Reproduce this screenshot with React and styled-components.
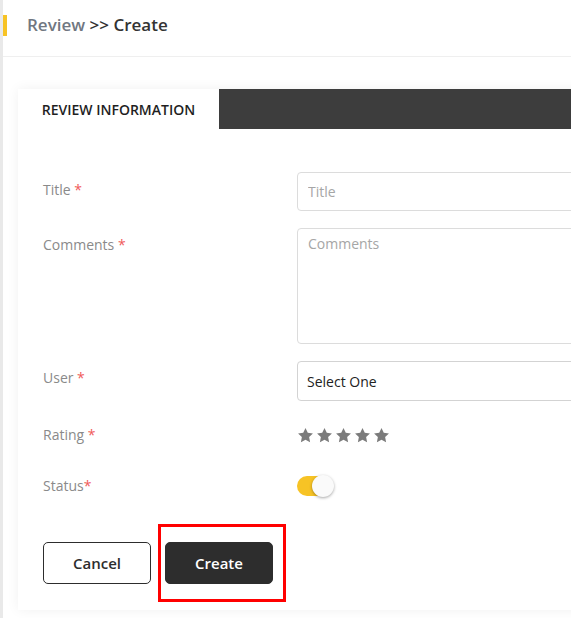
import React from 'react'
import styled, { createGlobalStyle } from 'styled-components'

const Global = createGlobalStyle`
  html, body { margin: 0; padding: 0; background: #fff; }
  body { font-family: "Open Sans", "Liberation Sans", sans-serif; overflow: hidden; }
  * { box-sizing: border-box; }
`

const Page = styled.div`
  width: 571px;
  height: 618px;
  overflow: hidden;
  border-left: 3px solid #e9e9e9;
  background: #fff;
`

const Header = styled.div`
  height: 57px;
  display: flex;
  align-items: center;
  padding-left: 24px;
  position: relative;
  border-bottom: 1px solid #efefef;
  padding-bottom: 7px;
  &::before {
    content: "";
    position: absolute;
    left: 0;
    top: 15px;
    width: 4px;
    height: 21px;
    background: #f7c325;
  }
`

const Crumb = styled.h1`
  margin: 0;
  font-size: 17px;
  font-weight: 600;
  color: #333;
  span { color: #707781; }
`

const Body = styled.div`
  padding: 32px 0 0 15px;
`

const Card = styled.div`
  width: 640px;
  background: #fff;
  box-shadow: 0 0 12px rgba(0, 0, 0, 0.06);
`

const Tabs = styled.div`
  display: flex;
  height: 40px;
  background: #3d3d3d;
`

const Tab = styled.div`
  width: 201px;
  display: flex;
  align-items: center;
  justify-content: center;
  background: ${p => (p.$active ? '#fff' : 'transparent')};
  color: #1f1f1f;
  font-size: 14px;
  font-weight: 600;
`

const Form = styled.div`
  padding: 43px 0 26px 25px;
`

const Row = styled.div`
  display: grid;
  grid-template-columns: 254px 1fr;
  align-items: start;
  margin-bottom: ${p => p.$gap ?? 17}px;
  min-height: ${p => p.$h || 0}px;
`

const Label = styled.label`
  font-size: 14px;
  line-height: 20px;
  color: #8a8a8a;
  padding-top: ${p => p.$pt ?? 7}px;
  b { color: #f05a5a; font-weight: 400; }
`

const Input = styled.input`
  width: 100%;
  height: 39px;
  border: 1px solid #dcdcdc;
  border-radius: 4px;
  padding: 0 10px;
  font-family: inherit;
  font-size: 14px;
  color: #333;
  &::placeholder { color: #a6a6a6; }
`

const TextArea = styled.textarea`
  width: 100%;
  height: 116px;
  border: 1px solid #dcdcdc;
  border-radius: 4px;
  padding: 5px 10px;
  font-family: inherit;
  font-size: 14px;
  resize: none;
  display: block;
  &::placeholder { color: #a6a6a6; }
`

const Select = styled.div`
  height: 40px;
  border: 1px solid #d3d3d3;
  border-radius: 4px;
  padding: 0 9px;
  display: flex;
  align-items: center;
  font-size: 14px;
  color: #222;
`

const Stars = styled.div`
  display: flex;
  gap: 2px;
  padding-top: 9px;
`

const Toggle = styled.div`
  position: relative;
  width: 36px;
  height: 20px;
  margin-top: 7px;
  border-radius: 10px;
  background: #f7c325;
  &::after {
    content: "";
    position: absolute;
    right: -1px;
    top: -1px;
    width: 22px;
    height: 22px;
    border-radius: 50%;
    background: #fafafa;
    box-shadow: 0 1px 3px rgba(0, 0, 0, 0.35);
  }
`

const Actions = styled.div`
  display: flex;
  gap: 14px;
  margin-top: 42px;
`

const Button = styled.button`
  width: 108px;
  height: 42px;
  border-radius: 5px;
  font-family: inherit;
  font-size: 15px;
  font-weight: 600;
  border: 1px solid #2d2d2d;
  background: ${p => (p.$primary ? '#2d2d2d' : '#fff')};
  color: ${p => (p.$primary ? '#fff' : '#2d2d2d')};
  position: relative;
  ${p => p.$highlight && `
    &::after {
      content: "";
      position: absolute;
      left: -8px;
      top: -19px;
      width: 128px;
      height: 78px;
      border: 3px solid #f00;
      box-sizing: border-box;
    }
  `}
`

const Star = () => (
  <svg width="17" height="17" viewBox="0 0 24 24" fill="#7b7b7b">
    <path d="M12 1.5l3.2 6.7 7.3.9-5.4 5.1 1.4 7.3L12 17.9l-6.5 3.6 1.4-7.3-5.4-5.1 7.3-.9z" />
  </svg>
)

export default function App() {
  return (
    <Page>
      <Global />
      <Header>
        <Crumb><span>Review</span> &gt;&gt; Create</Crumb>
      </Header>
      <Body>
        <Card>
          <Tabs>
            <Tab $active>REVIEW INFORMATION</Tab>
          </Tabs>
          <Form>
            <Row>
              <Label $pt={8}>Title <b>*</b></Label>
              <Input placeholder="Title" />
            </Row>
            <Row>
              <Label $pt={7}>Comments <b>*</b></Label>
              <TextArea placeholder="Comments" />
            </Row>
            <Row>
              <Label $pt={7}>User <b>*</b></Label>
              <Select>Select One</Select>
            </Row>
            <Row $h={51} $gap={0}>
              <Label $pt={7}>Rating <b>*</b></Label>
              <Stars>
                {[0, 1, 2, 3, 4].map(i => <Star key={i} />)}
              </Stars>
            </Row>
            <Row $h={31} $gap={0}>
              <Label $pt={7}>Status<b>*</b></Label>
              <Toggle />
            </Row>
            <Actions>
              <Button>Cancel</Button>
              <Button $primary $highlight>Create</Button>
            </Actions>
          </Form>
        </Card>
      </Body>
    </Page>
  )
}
